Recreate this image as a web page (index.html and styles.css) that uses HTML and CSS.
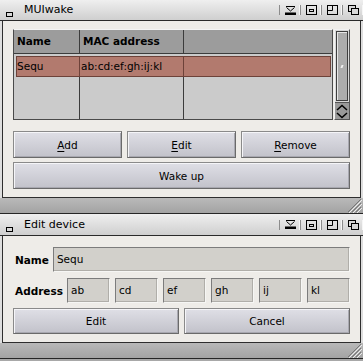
FILE: index.html
```
<!DOCTYPE html>
<html lang="en">
<head>
<meta charset="UTF-8">
<title>MUIwake</title>
<link rel="stylesheet" href="styles.css">
</head>
<body>

<!-- Main window -->
<div class="win">
  <div class="titlebar">
    <span class="close-gad"></span>
    <span class="title">MUIwake</span>
    <div class="gadgets">
      <span class="gad"><svg width="11" height="9" viewBox="0 0 11 9"><path d="M1 0.5H10M1.5 1.5L5.5 5L9.5 1.5" stroke="#000" fill="none"/><rect x="0" y="6.5" width="11" height="2.5" fill="#000"/></svg></span>
      <span class="gad"><svg width="11" height="10" viewBox="0 0 11 10"><rect x="0.5" y="0.5" width="10" height="9" fill="none" stroke="#000"/><rect x="3.5" y="4.5" width="4" height="2" fill="none" stroke="#000"/></svg></span>
      <span class="gad"><svg width="11" height="10" viewBox="0 0 11 10"><rect x="0.5" y="0.5" width="10" height="9" fill="none" stroke="#000"/><path d="M5.5 0.5V5.5H0.5" fill="none" stroke="#000"/></svg></span>
      <span class="gad"><svg width="11" height="10" viewBox="0 0 11 10"><rect x="0.5" y="0.5" width="7" height="6" fill="#d8d8d8" stroke="#000"/><rect x="3.5" y="3.5" width="7" height="6" fill="#d8d8d8" stroke="#000"/></svg></span>
    </div>
  </div>

  <div class="wbody main-body">
    <div class="listview">
      <div class="list">
        <div class="lhead">
          <div class="cell c1">Name</div>
          <div class="cell c2">MAC address</div>
          <div class="cell c3"></div>
        </div>
        <div class="lrows">
          <div class="lrow sel">
            <div class="cell c1">Sequ</div>
            <div class="cell c2">ab:cd:ef:gh:ij:kl</div>
            <div class="cell c3"></div>
          </div>
          <div class="lrow fill">
            <div class="cell c1"></div>
            <div class="cell c2"></div>
            <div class="cell c3"></div>
          </div>
        </div>
      </div>
      <div class="scroller">
        <div class="track"><div class="knob"><span class="grip-dot"></span></div></div>
        <div class="arrows">
          <svg width="12" height="7" viewBox="0 0 12 7"><path d="M1 6L6 1.5L11 6" stroke="#000" stroke-width="1.5" fill="none"/></svg>
          <svg width="12" height="7" viewBox="0 0 12 7"><path d="M1 1L6 5.5L11 1" stroke="#000" stroke-width="1.5" fill="none"/></svg>
        </div>
      </div>
    </div>

    <div class="btnrow three">
      <button class="btn"><u>A</u>dd</button>
      <button class="btn"><u>E</u>dit</button>
      <button class="btn"><u>R</u>emove</button>
    </div>
    <button class="btn wide">Wake up</button>
  </div>
  <div class="wfoot">
    <svg class="sizer" width="16" height="15" viewBox="0 0 16 15"><path d="M15 1L2 14M15 5L6 14M15 9L10 14" stroke="#777" fill="none"/><path d="M16 2L3 15M16 6L7 15M16 10L11 15" stroke="#eee" fill="none"/></svg>
  </div>
</div>

<!-- Edit device window -->
<div class="win">
  <div class="titlebar second">
    <span class="close-gad"></span>
    <span class="title">Edit device</span>
    <div class="gadgets">
      <span class="gad"><svg width="11" height="9" viewBox="0 0 11 9"><path d="M1 0.5H10M1.5 1.5L5.5 5L9.5 1.5" stroke="#000" fill="none"/><rect x="0" y="6.5" width="11" height="2.5" fill="#000"/></svg></span>
      <span class="gad"><svg width="11" height="10" viewBox="0 0 11 10"><rect x="0.5" y="0.5" width="10" height="9" fill="none" stroke="#000"/><rect x="3.5" y="4.5" width="4" height="2" fill="none" stroke="#000"/></svg></span>
      <span class="gad"><svg width="11" height="10" viewBox="0 0 11 10"><rect x="0.5" y="0.5" width="10" height="9" fill="none" stroke="#000"/><path d="M5.5 0.5V5.5H0.5" fill="none" stroke="#000"/></svg></span>
      <span class="gad"><svg width="11" height="10" viewBox="0 0 11 10"><rect x="0.5" y="0.5" width="7" height="6" fill="#d8d8d8" stroke="#000"/><rect x="3.5" y="3.5" width="7" height="6" fill="#d8d8d8" stroke="#000"/></svg></span>
    </div>
  </div>

  <div class="wbody edit-body">
    <div class="frow">
      <span class="lbl">Name</span>
      <div class="field">Sequ</div>
    </div>
    <div class="frow">
      <span class="lbl">Address</span>
      <div class="fields">
        <div class="field">ab</div>
        <div class="field">cd</div>
        <div class="field">ef</div>
        <div class="field">gh</div>
        <div class="field">ij</div>
        <div class="field">kl</div>
      </div>
    </div>
    <div class="btnrow">
      <button class="btn tall">Edit</button>
      <button class="btn tall">Cancel</button>
    </div>
  </div>
  <div class="wfoot">
    <svg class="sizer" width="16" height="15" viewBox="0 0 16 15"><path d="M15 1L2 14M15 5L6 14M15 9L10 14" stroke="#777" fill="none"/><path d="M16 2L3 15M16 6L7 15M16 10L11 15" stroke="#eee" fill="none"/></svg>
  </div>
</div>

</body>
</html>
```

FILE: styles.css
```
* {
  box-sizing: border-box;
}

html, body {
  margin: 0;
  padding: 0;
}

body {
  width: 363px;
  height: 361px;
  overflow: hidden;
  background: #a8a8a8;
  font-family: "DejaVu Sans", sans-serif;
  font-size: 10.5px;
  color: #000;
}

.win {
  display: flex;
  flex-direction: column;
  background: #dedede;
}

/* title bar */
.titlebar {
  height: 21px;
  display: flex;
  align-items: center;
  background: linear-gradient(#efefef, #cfcfcf);
  border-bottom: 1px solid #2a2a2a;
}
.titlebar.second {
  height: 22px;
}

.close-gad {
  width: 7px;
  height: 5px;
  border: 1px solid #000;
  align-self: flex-end;
  margin: 0 11px 3px 6px;
}

.title {
  flex: 1;
  font-size: 11px;
  padding-bottom: 1px;
}

.gadgets {
  display: flex;
  align-items: center;
}

.gad {
  width: 21px;
  height: 10px;
  display: flex;
  align-items: center;
  padding-left: 5px;
  border-left: 1px solid #8c8c8c;
  box-shadow: -1px 0 0 #f6f6f6 inset;
}
.gad svg {
  display: block;
}

/* window body */
.wbody {
  margin: 0 2px;
  background: #eeece8;
  border-left: 1px solid #2e2e2e;
  border-right: 1px solid #2e2e2e;
  border-bottom: 1px solid #2e2e2e;
  padding: 0 10px;
}

.main-body {
  padding-top: 8px;
  padding-bottom: 8px;
}

.edit-body {
  padding-top: 11px;
  padding-bottom: 8px;
}

.wfoot {
  height: 16px;
  background: linear-gradient(#b9b9b9, #a3a3a3);
  border-bottom: 1px solid #262626;
  display: flex;
  justify-content: flex-end;
  align-items: flex-end;
}
.sizer {
  display: block;
  margin-right: 1px;
}

/* listview */
.listview {
  display: flex;
  gap: 1px;
  height: 91px;
}

.list {
  width: 320px;
  display: flex;
  flex-direction: column;
  border: 1px solid #4a4a4a;
  border-top-color: #f4f4f4;
  background: #cbcbcb;
}

.cell {
  border-right: 1px solid #3c3c3c;
  padding-left: 3px;
  white-space: nowrap;
  overflow: hidden;
}
.cell.c3 {
  flex: 1;
  border-right: none;
}

.lhead {
  display: flex;
  height: 24px;
  background: #9c9c9c;
  border-bottom: 1px solid #3c3c3c;
  font-weight: bold;
}
.lhead .cell {
  line-height: 23px;
}
.lhead .c1 {
  width: 66px;
}
.lhead .c2 {
  width: 104px;
}

.lrows {
  flex: 1;
  display: flex;
  flex-direction: column;
}

.lrow {
  display: flex;
}

.lrow.sel {
  height: 21px;
  margin: 2px 1px 0 2px;
  background: #b27a6e;
  border: 1px solid #6d4239;
}
.sel .cell {
  line-height: 19px;
  border-right-color: #6d4239;
}
.sel .c1 {
  width: 63px;
  padding-left: 0;
}
.sel .c2 {
  width: 104px;
  padding-left: 1px;
}

.lrow.fill {
  flex: 1;
}
.fill .c1 {
  width: 66px;
}
.fill .c2 {
  width: 104px;
}

/* scroller */
.scroller {
  width: 16px;
  display: flex;
  flex-direction: column;
  border: 1px solid #555;
  border-top-color: #f2f2f2;
  border-left-color: #f2f2f2;
  background: #9c9c9c;
}

.track {
  flex: 1;
  padding: 1px;
  background: #d8d8d8;
}

.knob {
  height: 100%;
  background: #acacac;
  border: 1px solid #3e3e3e;
  box-shadow: 1px 1px 0 #e6e6e6 inset;
  display: flex;
  align-items: center;
  justify-content: center;
}
.grip-dot {
  width: 2px;
  height: 3px;
  background: #f0f0f0;
  transform: skewX(-20deg);
}

.arrows {
  height: 17px;
  display: flex;
  flex-direction: column;
  align-items: center;
  justify-content: space-around;
  background: #9a9a9a;
  border-top: 1px solid #555;
}
.arrows svg {
  display: block;
}

/* buttons */
.btnrow {
  display: flex;
  gap: 5px;
}
.btnrow.three {
  margin-top: 11px;
}

.btn {
  flex: 1;
  height: 27px;
  font-family: inherit;
  font-size: 10.5px;
  color: #000;
  background: linear-gradient(#dfdfe6, #c2c2ca);
  border: 1px solid #6a6a6a;
  border-top-color: #8a8a8a;
  border-left-color: #8a8a8a;
  box-shadow: 1px 1px 0 #f5f5f8 inset, -1px -1px 0 #a8a8b0 inset;
  padding: 0;
  border-radius: 0;
}
.btn u {
  text-underline-offset: 2px;
}
.btn.wide {
  width: 100%;
  margin-top: 4px;
}
.btn.tall {
  height: 26px;
}

/* edit form */
.frow {
  display: flex;
  align-items: center;
  gap: 4px;
  margin-bottom: 6px;
}
.frow + .frow {
  margin-bottom: 5px;
}

.lbl {
  font-weight: bold;
  padding-left: 2px;
}

.field {
  flex: 1;
  height: 25px;
  line-height: 23px;
  padding-left: 3px;
  background: #d2d0cb;
  border: 1px solid #f6f6f4;
  border-top-color: #7c7c7c;
  border-left-color: #7c7c7c;
  box-shadow: -1px -1px 0 #b0aea9 inset;
}

.fields {
  flex: 1;
  display: flex;
  gap: 5px;
}
```
